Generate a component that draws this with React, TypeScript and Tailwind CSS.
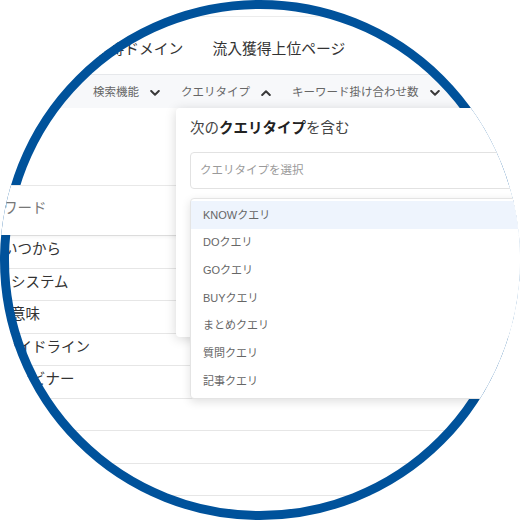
const rows = [
  { text: "いつから", pad: "pl-[3px]" },
  { text: "システム", pad: "pl-[11px]" },
  { text: "意味", pad: "pl-[11px]" },
  { text: "ガイドライン", pad: "pl-[3px]" },
  { text: "ウェビナー", pad: "pl-[2px]" },
  { text: "", pad: "" },
  { text: "", pad: "" },
  { text: "", pad: "" },
  { text: "", pad: "" },
];

const filters = [
  { label: "検索機能", open: false },
  { label: "クエリタイプ", open: true },
  { label: "キーワード掛け合わせ数", open: false },
];

const queryTypes = [
  "KNOWクエリ",
  "DOクエリ",
  "GOクエリ",
  "BUYクエリ",
  "まとめクエリ",
  "質問クエリ",
  "記事クエリ",
];

function Chevron({ up }: { up?: boolean }) {
  return (
    <svg
      viewBox="0 0 10 6"
      className="w-[10px] h-[6px]"
      fill="none"
      stroke="#3a3a3a"
      strokeWidth={2}
      strokeLinecap="round"
      strokeLinejoin="round"
    >
      <path d={up ? "M1.2 5L5 1.2 8.8 5" : "M1.2 1L5 4.8 8.8 1"} />
    </svg>
  );
}

export default function App() {
  return (
    <div className="relative w-[520px] h-[520px] bg-white font-['Liberation_Sans','Noto_Sans_CJK_JP',sans-serif]">
      <div className="relative w-[520px] h-[520px] rounded-full overflow-hidden bg-white">
        <div className="h-[16px]" />

        {/* top nav */}
        <div className="h-[58px] border-t border-[#ececec] flex items-center pt-[8px] pl-[65px] gap-[29px] text-[14.8px] text-[#333]">
          <span>流入獲得ドメイン</span>
          <span>流入獲得上位ページ</span>
        </div>

        {/* filter bar */}
        <div className="h-[34px] border-t border-[#e6e8eb] bg-[#f7f8fa] flex items-center pt-[3px] pl-[93px] gap-[21px] text-[11.5px] text-[#666]">
          {filters.map((f) => (
            <div key={f.label} className="flex items-center gap-[11px]">
              <span>{f.label}</span>
              <Chevron up={f.open} />
            </div>
          ))}
        </div>

        {/* table body */}
        <div className="relative">
          <div className="h-[77px]" />
          <div className="relative z-[1] h-[50px] border-t border-[#e8e8e8] bg-white flex items-center pb-[4px] text-[14.5px] text-[#777] shadow-[0_3px_5px_-2px_rgba(0,0,0,0.08)]">
            <span className="-ml-[26px]">キーワード</span>
          </div>
          {rows.map((r, i) => (
            <div
              key={i}
              className={`h-[32.5px] border-t border-[#e6e6e6] flex items-center pb-[3px] text-[14.5px] text-[#333] ${r.pad}`}
            >
              {r.text}
            </div>
          ))}

          {/* popover */}
          <div className="absolute z-[2] left-[176px] top-0 w-[380px] h-[229px] bg-white rounded-[4px] shadow-[0_2px_12px_rgba(0,0,0,0.16)] px-[14px] pt-[10px]">
            <p className="leading-[20px] text-[14.5px] text-[#444]">
              次の<span className="font-bold text-[#222]">クエリタイプ</span>を含む
            </p>
            <div className="mt-[14px] h-[37px] border border-[#e2e2e2] rounded-[4px] pl-[9px] flex items-center text-[11.5px] text-[#9a9a9a]">
              クエリタイプを選択
            </div>
          </div>

          {/* dropdown list */}
          <div className="absolute z-[3] left-[190px] top-[90px] w-[380px] bg-white border border-[#e4e4e4] rounded-[4px] shadow-[0_3px_10px_rgba(0,0,0,0.12)] pt-[2px] pb-[3px]">
            {queryTypes.map((q, i) => (
              <div
                key={q}
                className={`h-[27.7px] px-[12px] flex items-center text-[11px] text-[#666] ${i === 0 ? "bg-[#eef4fd]" : ""}`}
              >
                {q}
              </div>
            ))}
          </div>
        </div>
      </div>
      <div className="absolute inset-0 rounded-full border-[9px] border-[#00529b] pointer-events-none" />
    </div>
  );
}
